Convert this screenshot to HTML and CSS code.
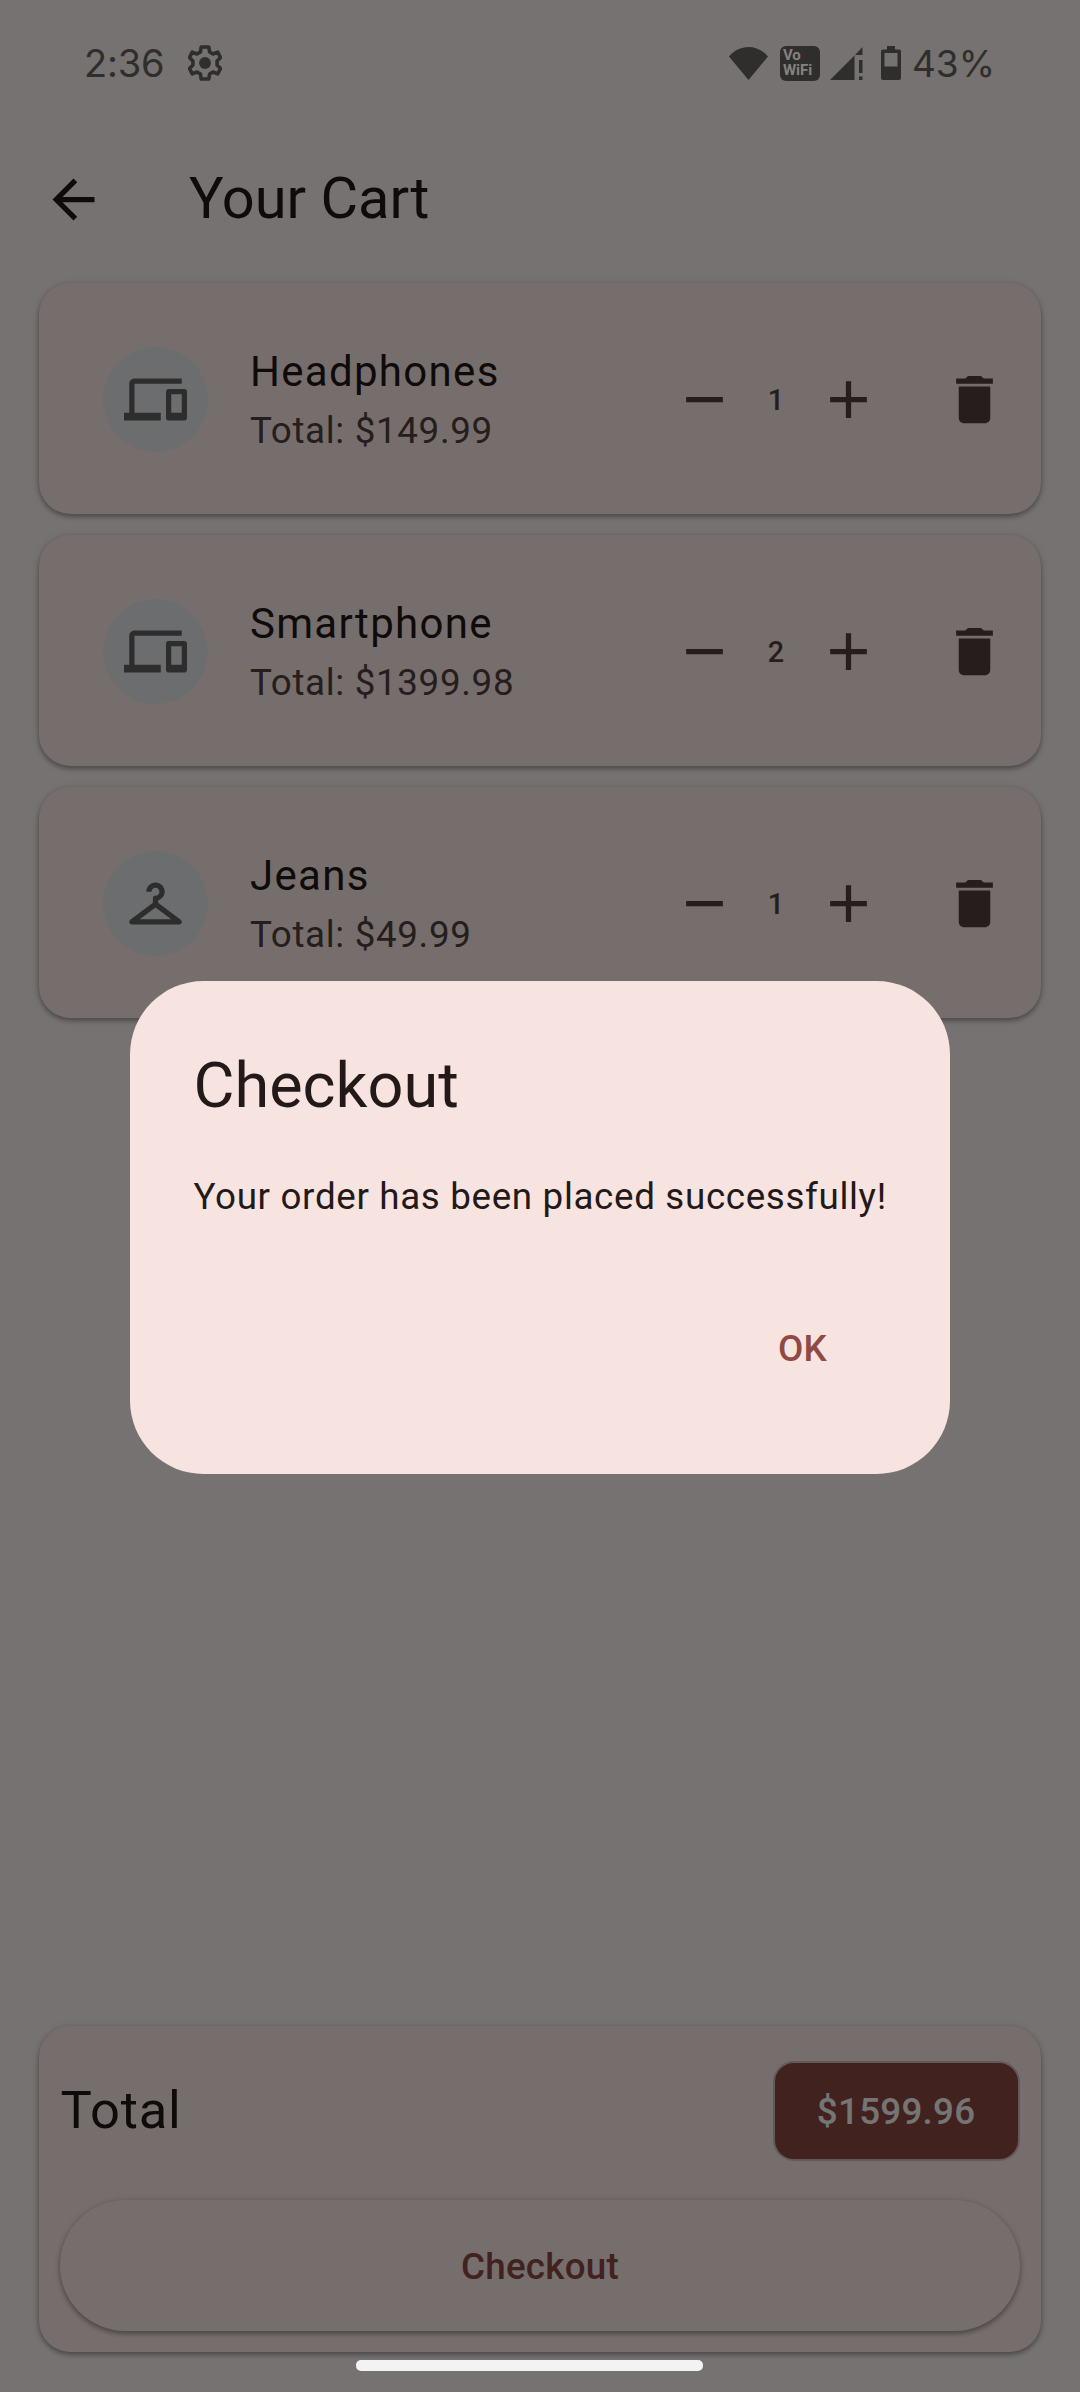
FILE: index.html
```html
<!DOCTYPE html>
<html lang="en">
<head>
<meta charset="utf-8">
<title>Your Cart</title>
<link rel="stylesheet" href="styles.css">
</head>
<body>
<svg width="0" height="0" class="sprite" aria-hidden="true">
  <symbol id="devices" viewBox="0 0 24 24"><path d="M4 6h18V4H4c-1.1 0-2 .9-2 2v11H0v3h14v-3H4V6zm19 2h-6c-.55 0-1 .45-1 1v10c0 .55.45 1 1 1h6c.55 0 1-.45 1-1V9c0-.55-.45-1-1-1zm-1 9h-4v-7h4v7z"/></symbol>
  <symbol id="hanger" viewBox="0 0 24 24"><path d="M21.6 18.2 13 11.75v-.91c1.65-.49 2.8-2.17 2.43-4.05-.26-1.31-1.3-2.4-2.61-2.7C10.54 3.57 8.5 5.3 8.5 7.5h2c0-.83.67-1.5 1.5-1.5s1.5.67 1.5 1.5c0 .84-.69 1.52-1.53 1.5-.54-.01-.97.45-.97.99v1.76L2.4 18.2c-.77.58-.36 1.8.6 1.8h18c.96 0 1.37-1.22.6-1.8zM6 18l6-4.5 6 4.5H6z"/></symbol>
  <symbol id="minus" viewBox="0 0 24 24"><path d="M19 13H5v-2h14v2z"/></symbol>
  <symbol id="plus" viewBox="0 0 24 24"><path d="M19 13h-6v6h-2v-6H5v-2h6V5h2v6h6v2z"/></symbol>
  <symbol id="trash" viewBox="0 0 24 24"><path d="M6 19c0 1.1.9 2 2 2h8c1.1 0 2-.9 2-2V7H6v12zM19 4h-3.5l-1-1h-5l-1 1H5v2h14V4z"/></symbol>
</svg>

<div class="screen">
  <header class="app-bar">
    <svg class="icon back" viewBox="0 0 24 24"><path d="M20 11H7.830l5.590-5.590L12 4l-8 8 8 8 1.410-1.410L7.830 13H20v-2z"/></svg>
    <h1 class="app-title">Your Cart</h1>
  </header>

  <main class="cart">
    <article class="card item">
      <div class="avatar"><svg class="icon"><use href="#devices"/></svg></div>
      <div class="info"><div class="name">Headphones</div><div class="price">Total: $149.99</div></div>
      <div class="actions">
        <button class="icon-btn"><svg class="icon"><use href="#minus"/></svg></button>
        <span class="qty">1</span>
        <button class="icon-btn"><svg class="icon"><use href="#plus"/></svg></button>
        <button class="icon-btn"><svg class="icon"><use href="#trash"/></svg></button>
      </div>
    </article>
    <article class="card item">
      <div class="avatar"><svg class="icon"><use href="#devices"/></svg></div>
      <div class="info"><div class="name">Smartphone</div><div class="price">Total: $1399.98</div></div>
      <div class="actions">
        <button class="icon-btn"><svg class="icon"><use href="#minus"/></svg></button>
        <span class="qty">2</span>
        <button class="icon-btn"><svg class="icon"><use href="#plus"/></svg></button>
        <button class="icon-btn"><svg class="icon"><use href="#trash"/></svg></button>
      </div>
    </article>
    <article class="card item">
      <div class="avatar"><svg class="icon"><use href="#hanger"/></svg></div>
      <div class="info"><div class="name">Jeans</div><div class="price">Total: $49.99</div></div>
      <div class="actions">
        <button class="icon-btn"><svg class="icon"><use href="#minus"/></svg></button>
        <span class="qty">1</span>
        <button class="icon-btn"><svg class="icon"><use href="#plus"/></svg></button>
        <button class="icon-btn"><svg class="icon"><use href="#trash"/></svg></button>
      </div>
    </article>
  </main>

  <footer class="card summary">
    <div class="summary-row">
      <span class="summary-label">Total</span>
      <span class="chip">$1599.96</span>
    </div>
    <button class="checkout">Checkout</button>
  </footer>
</div>

<div class="scrim">
  <section class="dialog" role="dialog">
    <h2 class="dialog-title">Checkout</h2>
    <p class="dialog-text">Your order has been placed successfully!</p>
    <div class="dialog-actions"><button class="ok">OK</button></div>
  </section>
</div>

<div class="status-bar">
  <span class="clock">2:36</span>
  <svg class="gear" viewBox="0 0 34 36"><path d="M13.200 2h7.600l.8 5 3.400 2 4.700-1.900 2.800 5.400-3.400 3.500v4l3.400 3.500-2.800 5.400-4.700-1.900-3.400 2-.8 5h-7.600l-.8-5-3.400-2-4.700 1.900-2.800-5.400L4.900 20v-4l-3.400-3.500 2.800-5.400L9 9l3.400-2z" fill="none" stroke="currentColor" stroke-width="3.600" stroke-linejoin="round"/><circle cx="17" cy="18" r="5.900"/></svg>
  <div class="system">
    <svg class="wifi" viewBox="0 0 39 33"><path d="M0 9.500C5 3.500 12 0 19.500 0S34 3.500 39 9.500L19.500 33z"/></svg>
    <div class="vowifi"><span>Vo</span><span>WiFi</span></div>
    <svg class="signal" viewBox="0 0 33 33"><path d="M0 33 24.500 8.500V33zM25 8l7.500-8v8zM29 13h3.500v13H29zM29 29.500h3.500V33H29z"/></svg>
    <svg class="battery" viewBox="0 0 20 34"><path fill-rule="evenodd" d="M6 0h8v3.500h4a2 2 0 0 1 2 2V32a2 2 0 0 1-2 2H2a2 2 0 0 1-2-2V5.500a2 2 0 0 1 2-2h4zM3.500 7v13.500h13V7z"/></svg>
    <span class="percent">43%</span>
  </div>
</div>
<div class="nav-handle"></div>
</body>
</html>
```
FILE: styles.css
```css
:root {
  --surface: #fff8f7;
  --card: #fff0ee;
  --primary: #904a43;
  --on-surface: #231918;
  --on-surface-variant: #534341;
  --outline: #d8c2bf;
  --status: #2f2e2c;
}

* { box-sizing: border-box; }

body {
  margin: 0;
  width: 1080px;
  height: 2392px;
  overflow: hidden;
  background: var(--surface);
  color: var(--on-surface);
  font-family: Roboto, sans-serif;
  position: relative;
}

button { border: 0; padding: 0; background: none; font: inherit; color: inherit; }
h1, h2, p { margin: 0; font-weight: 400; }
.sprite { display: none; }
.icon { display: block; width: 63px; height: 63px; fill: currentColor; }

.screen {
  display: flex;
  flex-direction: column;
  height: 2392px;
  padding: 126px 39.4px 40px;
}

.app-bar { display: flex; align-items: center; height: 147px; padding-left: 2.6px; }
.app-title { margin-left: 84px; padding-bottom: 3px; font-size: 57.75px; line-height: 74px; }

.cart { display: flex; flex-direction: column; gap: 21px; padding-top: 10.4px; flex: 1; }

.card {
  background: var(--card);
  border-radius: 31.5px;
  box-shadow: 0 3px 4px rgba(0,0,0,.2), 0 2px 6px rgba(0,0,0,.14), 0 1px 8px rgba(0,0,0,.1);
}

.item { display: flex; align-items: center; height: 231px; padding: 1px 3.2px 0 63.2px; }
.avatar {
  width: 105px; height: 105px; border-radius: 50%;
  display: flex; align-items: center; justify-content: center;
  background: #eceeef; color: #626262;
}
.info { margin-left: 42.4px; padding-top: 3px; flex: 1; }
.name { font-size: 42px; line-height: 60px; letter-spacing: 1.31px; }
.price { font-size: 36.75px; line-height: 58px; letter-spacing: .66px; color: var(--on-surface-variant); }
.actions { display: flex; align-items: center; color: var(--on-surface-variant); }
.icon-btn { width: 126px; height: 126px; display: flex; align-items: center; justify-content: center; }
.qty { width: 17.8px; padding-top: 1px; font-size: 28.875px; font-weight: 500; letter-spacing: 1.31px; line-height: 42px; }

.summary { height: 326px; padding: 35px 21px 21px; display: flex; flex-direction: column; justify-content: space-between; }
.summary-row { display: flex; align-items: center; justify-content: space-between; }
.summary-label { padding-bottom: 2px; font-size: 52.5px; letter-spacing: .8px; }
.chip {
  width: 247px; height: 100px; display: flex; align-items: center; justify-content: center;
  background: var(--primary); color: #fff; border: 2.625px solid var(--outline); border-radius: 21px;
  font-size: 36.75px; font-weight: 500; letter-spacing: .26px;
}
.checkout {
  height: 131px; padding-top: 1px; border-radius: 66px; background: var(--card); color: var(--primary);
  font-size: 36.75px; font-weight: 500; letter-spacing: .26px;
  box-shadow: 0 3px 4px rgba(0,0,0,.2), 0 2px 6px rgba(0,0,0,.14), 0 1px 8px rgba(0,0,0,.1);
}

.scrim {
  position: absolute; inset: 0;
  display: flex; justify-content: center; align-items: flex-start;
  padding-top: 980.7px;
  background: rgba(0,0,0,.54);
}
.dialog { width: 820px; height: 493.6px; padding: 63px 63.5px; border-radius: 73.5px; background: #f7e4e1; }
.dialog-title { font-size: 63px; line-height: 84px; }
.dialog-text { margin-top: 43px; font-size: 36.75px; line-height: 52.5px; letter-spacing: .66px; white-space: nowrap; }
.dialog-actions { display: flex; justify-content: flex-end; margin-top: 62px; }
.ok { width: 168px; height: 126px; color: var(--primary); font-size: 36.75px; font-weight: 500; letter-spacing: .26px; }

.status-bar {
  position: absolute; top: 0; left: 0; width: 1080px; height: 126px;
  display: flex; align-items: center; padding: 0 85px 0 84px; color: var(--status);
  font-family: Inter, Roboto, sans-serif;
}
.status-bar svg { fill: currentColor; }
.clock { font-size: 38px; letter-spacing: -.2px; }
.gear { width: 34px; height: 36px; margin-left: 24px; }
.system { display: flex; align-items: center; margin-left: auto; }
.wifi { width: 39px; height: 33px; }
.vowifi {
  width: 40px; height: 35px; margin-left: 12px; padding: 2px 0 0 3px; border-radius: 6px;
  background: var(--status); color: #858280; display: flex; flex-direction: column;
  font: 700 15px/15px Roboto, sans-serif;
}
.signal { width: 33px; height: 33px; margin-left: 10px; }
.battery { width: 20px; height: 34px; margin-left: 18px; }
.percent { margin-left: 11px; font-size: 37px; }

.nav-handle {
  position: absolute; left: 356px; top: 2360px; width: 347px; height: 11px;
  border-radius: 5px; background: #f3f3f3;
}
```
